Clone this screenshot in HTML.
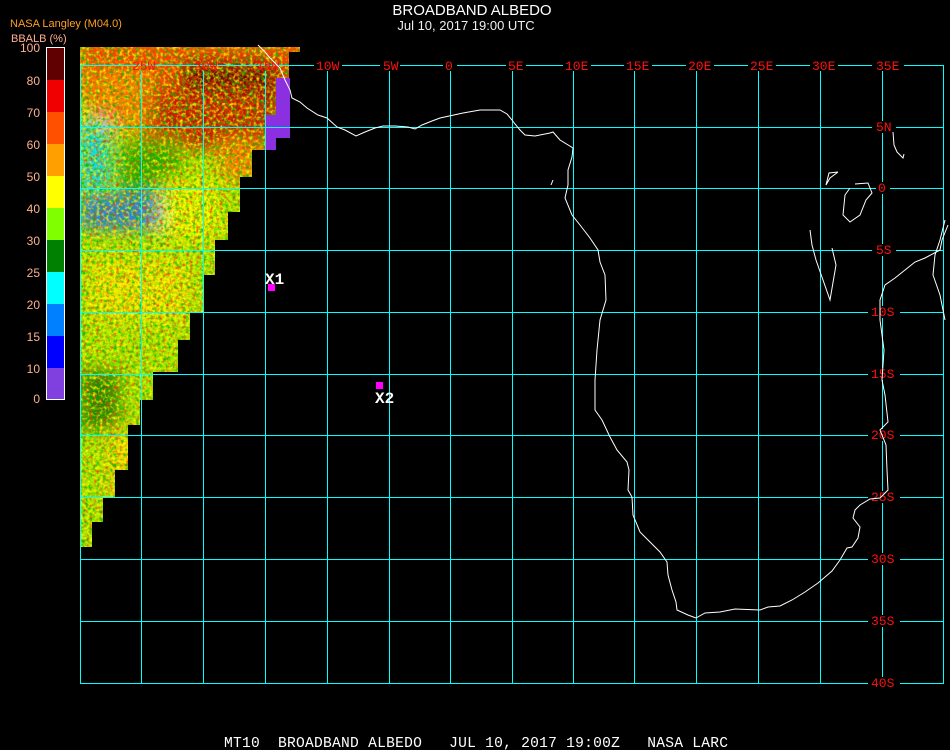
<!DOCTYPE html>
<html><head><meta charset="utf-8"><style>
html,body{margin:0;padding:0;background:#000;width:950px;height:750px;overflow:hidden}
svg{display:block}
.lab{fill:#ff1010;font-family:"Liberation Mono",monospace;font-size:13px}
</style></head><body>
<svg width="950" height="750" viewBox="0 0 950 750" xmlns="http://www.w3.org/2000/svg" style="font-family:'Liberation Sans',sans-serif">
<defs>
<clipPath id="dc"><polygon points="80,47 300,47 300,52 289,52 289,78 276,78 276,115 265,115 265,150 252,150 252,177 240,177 240,212 228,212 228,240 215,240 215,275 203,275 203,312 190,312 190,340 178,340 178,372 153,372 153,400 140,400 140,425 128,425 128,470 115,470 115,497 103,497 103,522 92,522 92,547 80,547"/></clipPath>
<filter id="bl" x="-20%" y="-20%" width="140%" height="140%"><feGaussianBlur stdDeviation="8"/></filter>
<filter id="nz"><feTurbulence type="fractalNoise" baseFrequency="0.3" numOctaves="2" seed="4"/><feColorMatrix type="matrix" values="0 0 0 0 0.85  0 0 0 0 0.05  0 0 0 0 0  0 0 0 2.4 -1.05"/></filter>
<filter id="nz2"><feTurbulence type="fractalNoise" baseFrequency="0.28" numOctaves="2" seed="9"/><feColorMatrix type="matrix" values="0 0 0 0 0  0 0 0 0 0.5  0 0 0 0 0  0 0 0 2.4 -1.1"/></filter>
<filter id="nz3"><feTurbulence type="fractalNoise" baseFrequency="0.3" numOctaves="2" seed="21"/><feColorMatrix type="matrix" values="0 0 0 0 1  0 0 0 0 1  0 0 0 0 0  0 0 0 2.4 -1.1"/></filter>
</defs>
<g clip-path="url(#dc)">
<rect x="80" y="47" width="220" height="500" fill="#a8f000"/>
<g filter="url(#bl)">
<rect x="80" y="40" width="230" height="60" fill="#ff4000"/>
<rect x="180" y="60" width="100" height="60" fill="#700000"/>
<rect x="140" y="90" width="130" height="60" fill="#c81800"/>
<rect x="220" y="140" width="40" height="40" fill="#ff8000"/>
<rect x="90" y="70" width="60" height="60" fill="#ff8000"/>
<rect x="80" y="120" width="30" height="70" fill="#00e0ff"/>
<rect x="120" y="140" width="60" height="60" fill="#20b000"/>
<rect x="80" y="195" width="80" height="35" fill="#2080ff"/>
<rect x="160" y="180" width="60" height="60" fill="#e8ff00"/>
<rect x="90" y="260" width="100" height="60" fill="#f0f000"/>
<rect x="80" y="370" width="40" height="60" fill="#208000"/>
<rect x="110" y="430" width="30" height="80" fill="#f8e000"/>
</g>
<rect x="80" y="47" width="220" height="500" filter="url(#nz)"/>
<rect x="80" y="47" width="220" height="500" filter="url(#nz2)"/>
<rect x="80" y="47" width="220" height="500" filter="url(#nz3)"/>
</g>
<polygon points="276,78 290,78 290,138 276,138 276,150 265,150 265,115 276,115" fill="#8a30e0"/>
<g stroke="#00ffff" stroke-width="1" fill="none" shape-rendering="crispEdges">
<rect x="80.5" y="65.5" width="863" height="618"/>
<path d="M141.5 71V684M203.5 71V684M265.5 71V684M327.5 71V684M389.5 71V684M450.5 71V684M512.5 71V684M573.5 71V684M634.5 71V684M696.5 71V684M758.5 71V684M820.5 71V684M882.5 71V684"/>
<path d="M80 127.5H944M80 188.5H944M80 250.5H944M80 312.5H944M80 374.5H944M80 435.5H944M80 497.5H944M80 559.5H944M80 621.5H944"/>
</g>
<g fill="#000" shape-rendering="crispEdges">
<rect x="314" y="60" width="28" height="11"/><rect x="380" y="60" width="20" height="11"/><rect x="443" y="60" width="14" height="11"/><rect x="506" y="60" width="20" height="11"/><rect x="563" y="60" width="28" height="11"/><rect x="624" y="60" width="28" height="11"/><rect x="686" y="60" width="28" height="11"/><rect x="748" y="60" width="28" height="11"/><rect x="810" y="60" width="28" height="11"/><rect x="872" y="60" width="32" height="11"/>
<rect x="872" y="121" width="24" height="12"/><rect x="876" y="182" width="14" height="12"/><rect x="872" y="244" width="24" height="12"/><rect x="868" y="306" width="32" height="12"/><rect x="868" y="368" width="32" height="12"/><rect x="868" y="429" width="32" height="12"/><rect x="868" y="491" width="32" height="12"/><rect x="868" y="553" width="32" height="12"/><rect x="868" y="615" width="32" height="12"/><rect x="868" y="677" width="32" height="12"/>
</g>
<g class="lab">
<text x="132" y="70">25W</text><text x="194" y="70">20W</text><text x="256" y="70">15W</text><text x="316" y="70">10W</text><text x="383" y="70">5W</text><text x="445" y="70">0</text><text x="508" y="70">5E</text><text x="565" y="70">10E</text><text x="626" y="70">15E</text><text x="688" y="70">20E</text><text x="750" y="70">25E</text><text x="812" y="70">30E</text><text x="876" y="70">35E</text>
<text x="876" y="131">5N</text><text x="878" y="192">0</text><text x="876" y="254">5S</text><text x="871" y="316">10S</text><text x="871" y="378">15S</text><text x="871" y="439">20S</text><text x="871" y="501">25S</text><text x="871" y="563">30S</text><text x="871" y="625">35S</text><text x="871" y="687">40S</text>
</g>
<g stroke="#fff" stroke-width="1" fill="none">
<polyline points="258,45 265,52 270,58 280,68 285,80 290,90 292,98 300,102 307,108 318,115 327,118 337,127 345,130 356,136 365,132 375,128 383,126 395,126 408,127 415,129 422,125 432,121 440,118 463,113 480,110 500,110 507,114 512,120 515,124 520,130 525,135 535,136 550,133 553,132 560,140 573,148 572,157 568,170 568,185 565,198 572,215 580,225 590,238 598,250 600,262 605,275 606,300 600,320 597,350 595,380 595,410 602,420 610,437 617,450 627,462 629,470 628,490 632,497 633,515 640,532 650,542 660,552 667,562 668,575 672,590 676,602 677,610 688,615 696,618 705,613 720,612 735,609 760,610 768,607 780,606 792,600 805,592 818,583 832,571 840,560 847,548 852,547 858,538 860,527 853,518 855,510 860,505 870,499 880,498 888,490 887,470 886,445 880,430 888,422 885,395 882,380 884,350 880,320 880,300 885,285 895,278 905,270 915,262 925,258 940,250 942,240 948,225"/>
<polyline points="893,132 894,145 897,152 903,158 904,154"/>
<polyline points="838,172 830,178 826,185 829,173 838,172"/>
<polyline points="850,188 845,195 843,215 850,222 860,215 866,200 872,193 868,183 855,184"/>
<polyline points="810,230 812,245 816,260 823,280 830,300 836,265 832,248"/>
<polyline points="945,220 940,240 935,255 933,275 940,295 945,320"/>
<polyline points="553,180 551,185"/>
</g>
<rect x="268" y="284" width="7" height="7" fill="#ff00ff"/>
<rect x="376" y="382" width="7" height="7" fill="#ff00ff"/>
<text x="265" y="284" fill="#fff" style="font:bold 16px 'Liberation Mono',monospace">X1</text>
<text x="375" y="403" fill="#fff" style="font:bold 16px 'Liberation Mono',monospace">X2</text>
<g shape-rendering="crispEdges">
<rect x="46" y="47" width="19" height="353" fill="#fff"/>
<rect x="47" y="48" width="17" height="32" fill="#600000"/>
<rect x="47" y="80" width="17" height="32" fill="#f00000"/>
<rect x="47" y="112" width="17" height="32" fill="#ff5000"/>
<rect x="47" y="144" width="17" height="32" fill="#ffa000"/>
<rect x="47" y="176" width="17" height="32" fill="#ffff00"/>
<rect x="47" y="208" width="17" height="32" fill="#80ff00"/>
<rect x="47" y="240" width="17" height="32" fill="#008000"/>
<rect x="47" y="272" width="17" height="32" fill="#00ffff"/>
<rect x="47" y="304" width="17" height="32" fill="#0080ff"/>
<rect x="47" y="336" width="17" height="32" fill="#0000ff"/>
<rect x="47" y="368" width="17" height="31" fill="#8040e0"/>
</g>
<g fill="#ffb090" font-size="12" text-anchor="end">
<text x="40" y="52">100</text><text x="40" y="85">80</text><text x="40" y="117">70</text><text x="40" y="149">60</text><text x="40" y="181">50</text><text x="40" y="213">40</text><text x="40" y="245">30</text><text x="40" y="277">25</text><text x="40" y="309">20</text><text x="40" y="341">15</text><text x="40" y="373">10</text><text x="40" y="403">0</text>
</g>
<text x="10" y="27" fill="#ffa020" font-size="11">NASA Langley (M04.0)</text>
<text x="11" y="42" fill="#ffb090" font-size="11">BBALB (%)</text>
<text x="472" y="15" fill="#fff" font-size="15" text-anchor="middle">BROADBAND ALBEDO</text>
<text x="466" y="30" fill="#eee" font-size="13" text-anchor="middle">Jul 10, 2017 19:00 UTC</text>
<text x="224" y="747" fill="#fff" xml:space="preserve" style="font:14.6px 'Liberation Mono',monospace" textLength="504" lengthAdjust="spacing">MT10  BROADBAND ALBEDO   JUL 10, 2017 19:00Z   NASA LARC</text>
</svg>
</body></html>
